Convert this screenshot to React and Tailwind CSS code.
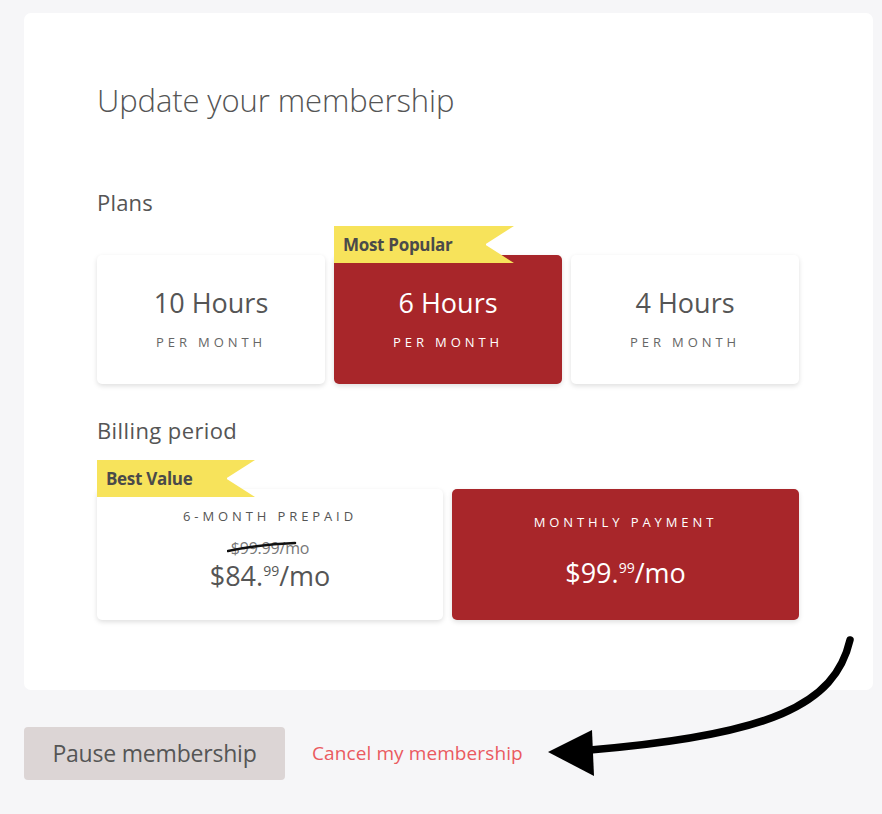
import { useState } from "react";

const plans = [
  { id: "10", label: "10 Hours" },
  { id: "6", label: "6 Hours", flag: "Most Popular", w: "w-[152px]" },
  { id: "4", label: "4 Hours" },
];

const Flag = ({ text, w, className }) => (
  <div className={`absolute flex items-center ${className}`}>
    <div className={`h-[37px] bg-[#f7e35b] pl-[9px] flex items-center text-[17px] font-bold text-[#4a4a4a] tracking-[-0.3px] ${w}`}>
      {text}
    </div>
    <svg width="29" height="37" viewBox="0 0 29 37" className="block -ml-px">
      <polygon points="0,0 29,0 0,18.5 29,37 0,37" fill="#f7e35b" />
    </svg>
  </div>
);

const App = () => {
  const [plan, setPlan] = useState("6");
  const [billing, setBilling] = useState("monthly");

  const card = "rounded-[5px] shadow-[0_2px_5px_rgba(0,0,0,0.13)] cursor-pointer";

  return (
    <div className="min-h-[814px] bg-[#f6f6f8] pt-[13px] pl-[24px] pr-[9px] font-['Open_Sans',sans-serif] text-[#555]">
      <div className="bg-white rounded-[7px] h-[677px] pl-[73px] pt-[68px]">
        <h1 className="text-[31px] font-light leading-[38px] text-[#555] tracking-[-0.1px]">Update your membership</h1>

        <div className="mt-[69px] text-[22px] leading-[28px] tracking-[0.2px]">Plans</div>
        <div className="flex gap-[9px] mt-[39px] w-[702px]">
          {plans.map((p) => {
            const on = plan === p.id;
            return (
              <div
                key={p.id}
                onClick={() => setPlan(p.id)}
                className={`relative w-[228px] h-[129px] flex flex-col items-center pt-[31px] ${card} ${
                  on ? "bg-[#a8262a] text-white" : "bg-white text-[#555]"
                }`}
              >
                {p.flag && <Flag text={p.flag} w={p.w} className="left-0 top-[-29px]" />}
                <div className="relative text-[27px] leading-[34px]">{p.label}</div>
                <div className={`relative mt-[14px] text-[13px] leading-[16px] tracking-[0.3em] ${on ? "text-white" : "text-[#666]"}`}>
                  PER MONTH
                </div>
              </div>
            );
          })}
        </div>

        <div className="mt-[32px] text-[22px] leading-[28px] tracking-[0.4px]">Billing period</div>
        <div className="flex gap-[9px] mt-[45px] w-[702px]">
          <div
            onClick={() => setBilling("prepaid")}
            className={`relative w-[346px] h-[131px] flex flex-col items-center pt-[19px] ${card} ${
              billing === "prepaid" ? "bg-[#a8262a] text-white" : "bg-white text-[#555]"
            }`}
          >
            <Flag text="Best Value" w="w-[130px]" className="left-0 top-[-29px]" />
            <div className="relative text-[13px] leading-[16px] tracking-[0.3em]">6-MONTH PREPAID</div>
            <div className="relative mt-[15px] text-[16px] leading-[18px] text-[#777] tracking-[-0.2px]">
              $99.99/mo
              <svg className="absolute left-[-4px] top-[1px]" width="70" height="14" viewBox="0 0 70 14">
                <path d="M1 11 C 20 7, 42 4, 68 3" stroke="#111" strokeWidth="2.6" fill="none" strokeLinecap="round" />
              </svg>
            </div>
            <div className="relative mt-[3px] text-[27px] leading-[32px]">
              $84.<span className="relative top-[-10px] text-[14px]">99</span>/mo
            </div>
          </div>
          <div
            onClick={() => setBilling("monthly")}
            className={`w-[347px] h-[131px] flex flex-col items-center pt-[25px] ${card} ${
              billing === "monthly" ? "bg-[#a8262a] text-white" : "bg-white text-[#555]"
            }`}
          >
            <div className="text-[13px] leading-[16px] tracking-[0.3em]">MONTHLY PAYMENT</div>
            <div className="mt-[27px] text-[27px] leading-[32px]">
              $99.<span className="relative top-[-10px] text-[14px]">99</span>/mo
            </div>
          </div>
        </div>
      </div>

      <div className="relative flex items-center mt-[37px]">
        <button className="w-[261px] h-[53px] rounded-[4px] bg-[#dcd5d5] text-[23px] text-[#555] tracking-[-0.2px]">
          Pause membership
        </button>
        <a className="ml-[27px] text-[19px] text-[#ea5a5f] cursor-pointer tracking-[0.1px]">Cancel my membership</a>
        <svg className="absolute left-[516px] top-[-92px]" width="320" height="150" viewBox="0 0 320 150">
          <path d="M310 5 C 295 70, 230 100, 50 115" stroke="#000" strokeWidth="7.5" fill="none" strokeLinecap="round" />
          <polygon points="8,117 52,95 54,141" fill="#000" />
        </svg>
      </div>
    </div>
  );
};

export default App;
